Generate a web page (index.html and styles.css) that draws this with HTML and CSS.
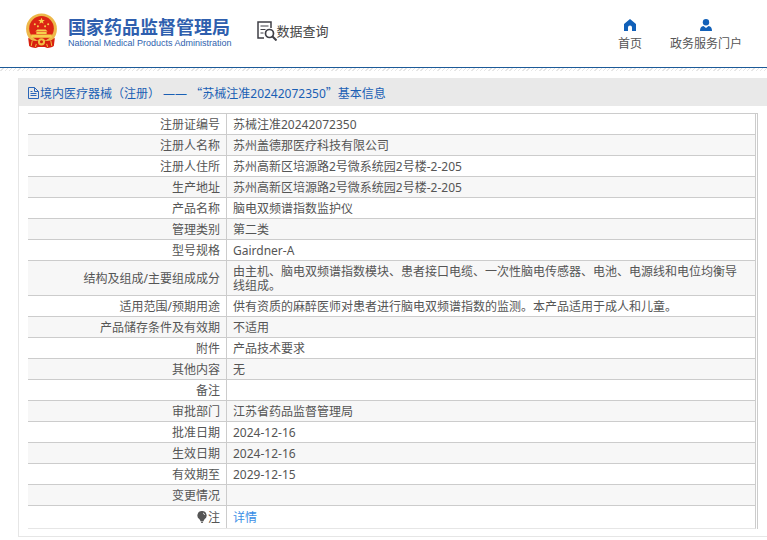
FILE: index.html
```
<!doctype html>
<html lang="zh-CN">
<head>
<meta charset="utf-8">
<meta name="viewport" content="width=device-width, initial-scale=1">
<title>国家药品监督管理局 数据查询</title>
<link rel="stylesheet" href="styles.css">
</head>
<body>

<header class="header">
	<a class="logo" href="#">
		<svg class="emblem" viewBox="0 0 32 35" aria-hidden="true">
			<path d="M4 24 L28 24 L27 32 L22 34 L16 32 L10 34 L5 32 Z" fill="#d8200f"/>
			<circle cx="16" cy="15.500" r="15" fill="#edb84a"/>
			<circle cx="16" cy="15" r="12" fill="#dc2414"/>
			<path d="M16 4.500l.9 2.200 2.300.1-1.800 1.500.6 2.200-2-1.200-2 1.200.6-2.200-1.800-1.500 2.300-.1z" fill="#f6d04d"/>
			<g fill="#f6d04d">
				<circle cx="9.500" cy="11" r="1"/><circle cx="12.500" cy="13" r="1"/>
				<circle cx="19.500" cy="13" r="1"/><circle cx="22.500" cy="11" r="1"/>
				<path d="M10 18l2-2h8l2 2zM11 18.500h10v2H11zM6 21h20v3H6z"/>
			</g>
			<path d="M3 24c4 4 8 3 10 3h6c2 0 6 1 10-3l-1 8c-3 2-5 2-8 1h-8c-3 1-5 1-8-1z" fill="#d8200f"/>
			<circle cx="16" cy="28" r="3.500" fill="#f0bd43"/>
			<circle cx="16" cy="28" r="1.500" fill="#d8200f"/>
			<path d="M7 27l-1 5M25 27l1 5M11 30l-1 3M21 30l1 3" stroke="#f0bd43" fill="none"/>
		</svg>
		<span class="logo-text">
			<span class="logo-cn">国家药品监督管理局</span>
			<span class="logo-en">National Medical Products Administration</span>
		</span>
	</a>

	<div class="search-title">
		<svg class="search-icon" viewBox="0 0 20 20" fill="none" stroke="#3f3f46" aria-hidden="true">
			<path d="M7 17H1V1h13v6" stroke-width="1.500"/>
			<path d="M3.500 5h8M3.500 8.500h5M3.500 12h3"/>
			<circle cx="12.500" cy="12.500" r="4" stroke-width="1.700"/>
			<path d="M15.500 15.500l4 4" stroke-width="2"/>
		</svg>
		<span>数据查询</span>
	</div>

	<nav class="nav">
		<a href="#">
			<svg viewBox="0 0 12 12" aria-hidden="true"><path d="M6 0L0 5v7h4V8.500a2 2 0 0 1 4 0V12h4V5z"/></svg>
			首页
		</a>
		<a href="#">
			<svg viewBox="0 0 12 12" aria-hidden="true"><circle cx="6" cy="3.200" r="3.200"/><path d="M0 12C0 9 1 7.500 3.500 7L6 9l2.500-2C11 7.500 12 9 12 12z"/></svg>
			政务服务门户
		</a>
	</nav>
</header>
<div class="stripe"></div>

<main class="panel">
	<h1 class="panel-title">
		<svg viewBox="0 0 11 12" fill="none" stroke="#2a66b8" aria-hidden="true"><path d="M.5.500h6l4 4v7H.5zM6.500.500v4h4M2.500 4.500h2M2.500 6.500h6M2.500 8.500h6"/></svg><span>境内医疗器械（注册） —— <span class="quote">“</span>苏械注准20242072350<span class="quote">”</span>基本信息</span>
	</h1>

	<div class="table-wrap">
		<table class="detail">
			<tr><th scope="row">注册证编号</th><td>苏械注准20242072350</td></tr>
			<tr><th scope="row">注册人名称</th><td>苏州盖德那医疗科技有限公司</td></tr>
			<tr><th scope="row">注册人住所</th><td>苏州高新区培源路2号微系统园2号楼-2-205</td></tr>
			<tr><th scope="row">生产地址</th><td>苏州高新区培源路2号微系统园2号楼-2-205</td></tr>
			<tr><th scope="row">产品名称</th><td>脑电双频谱指数监护仪</td></tr>
			<tr><th scope="row">管理类别</th><td>第二类</td></tr>
			<tr><th scope="row">型号规格</th><td>Gairdner-A</td></tr>
			<tr><th scope="row">结构及组成/主要组成成分</th><td>由主机、脑电双频谱指数模块、患者接口电缆、一次性脑电传感器、电池、电源线和电位均衡导线组成。</td></tr>
			<tr><th scope="row">适用范围/预期用途</th><td>供有资质的麻醉医师对患者进行脑电双频谱指数的监测。本产品适用于成人和儿童。</td></tr>
			<tr><th scope="row">产品储存条件及有效期</th><td>不适用</td></tr>
			<tr><th scope="row">附件</th><td>产品技术要求</td></tr>
			<tr><th scope="row">其他内容</th><td>无</td></tr>
			<tr><th scope="row">备注</th><td></td></tr>
			<tr><th scope="row">审批部门</th><td>江苏省药品监督管理局</td></tr>
			<tr><th scope="row">批准日期</th><td>2024-12-16</td></tr>
			<tr><th scope="row">生效日期</th><td>2024-12-16</td></tr>
			<tr><th scope="row">有效期至</th><td>2029-12-15</td></tr>
			<tr><th scope="row">变更情况</th><td></td></tr>
			<tr class="note">
				<th scope="row"><svg class="bulb" viewBox="0 0 10 12" aria-hidden="true"><path d="M5 0a4.500 4.500 0 0 1 2.500 8.300L6.500 10h-3l-1-1.700A4.500 4.500 0 0 1 5 0zM3.500 10.500h3L5.500 12h-1z" fill="#555"/><path d="M6 2q1.500.5 1.500 2" fill="none" stroke="#ddd"/></svg>注</th>
				<td><a href="#">详情</a></td>
			</tr>
		</table>
	</div>
</main>

</body>
</html>
```

FILE: styles.css
```
* { box-sizing: border-box; }

body { background: #fff; color: #555; font: 12px/14px "Noto Sans", "Noto Sans CJK SC", sans-serif; margin: 0; }
a { color: #3a8ee6; text-decoration: none; }
a:hover { text-decoration: underline; }

/* header */
.header { align-items: center; border-bottom: 1px solid #1c5a98; display: flex; height: 68px; padding: 0 25px 6px; }

.logo { align-items: center; color: #2f5fae; display: flex; gap: 10px; }
.emblem { height: 36px; width: 33px; }
.logo-text { display: flex; flex-direction: column; padding-top: 2px; }
.logo-cn { font: bold 18px/22px "Noto Sans CJK SC", sans-serif; }
.logo-en { font: 9px/12px "Liberation Sans", Arial, sans-serif; }

.search-title { align-items: center; color: #444; display: flex; font-size: 13px; margin-left: 25px; }
.search-icon { height: 20px; width: 20px; }

.nav { display: flex; gap: 28px; margin-left: auto; padding-top: 8px; }
.nav a { align-items: center; color: #555; display: flex; flex-direction: column; gap: 6px; }
.nav svg { fill: #1160b8; height: 12px; width: 12px; }

.stripe { background: repeating-linear-gradient(135deg, #fff 0 2px, #e6e6e6 2px 3px); height: 3px; }

/* record */
.panel { border: solid #e6e6e6; border-width: 0 0 1px 1px; margin: 7px 0 0 18px; padding-bottom: 7px; }
.panel-title { align-items: center; background: #e9e9e9; color: #1a5fb4; display: flex; font-size: 12px; font-weight: normal; height: 28px; margin: 0 0 7px; padding: 2px 9px 0; }
.panel-title svg { height: 12px; margin-right: 1px; width: 11px; }
.quote { font-family: "Noto Sans CJK SC", sans-serif; }

.table-wrap { border: solid #ccc; border-width: 1px 1px 0 0; margin: 0 9px; padding-right: 1px; }
.detail { border-bottom: 1px solid #e6e6e6; border-right: 1px solid #ccc; border-spacing: 0; width: 100%; }
.detail tr:nth-child(even) { background: #f7f7f7; }
.detail th, .detail td { border-bottom: 1px solid #ccc; height: 21px; padding: 4px 6px 2px; }
.detail th { border-right: 1px solid #ccc; font-weight: normal; text-align: right; width: 199px; }
.detail td { padding-right: 12px; }
.detail .note th, .detail .note td { border-bottom: 0; height: 22px; }
.bulb { height: 12px; margin-right: 1px; vertical-align: -1px; width: 10px; }
```
